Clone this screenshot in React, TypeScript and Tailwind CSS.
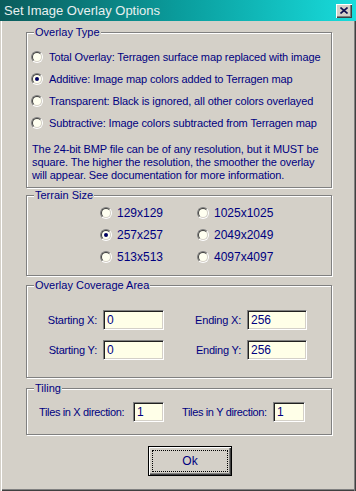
import React from 'react'

const groupBox =
  'ml-[26px] mr-[24px] border border-[#808080] shadow-[inset_1px_1px_0_#fff,1px_1px_0_#fff] px-[4px]'
const legendCls = 'ml-[3px] px-[1px] bg-[#d4d0c8] leading-[13px]'

function Radio({ checked = false }: { checked?: boolean }) {
  return (
    <span className="flex h-[12px] w-[12px] shrink-0 rounded-full border border-t-[#808080] border-l-[#808080] border-r-white border-b-white">
      <span className="flex flex-1 items-center justify-center rounded-full border border-t-[#404040] border-l-[#404040] border-r-[#d4d0c8] border-b-[#d4d0c8] bg-[#fffff0]">
        {checked && <span className="h-[4px] w-[4px] rounded-full bg-[#000060]" />}
      </span>
    </span>
  )
}

function Field({ value, w }: { value: string; w: string }) {
  return (
    <input
      defaultValue={value}
      className={`${w} h-[20px] bg-[#ffffe8] border border-t-[#808080] border-l-[#808080] border-r-white border-b-white shadow-[inset_1px_1px_0_#202020,inset_-1px_-1px_0_#d4d0c8] pl-[3px] text-[12px] text-[#000080] outline-none`}
    />
  )
}

const overlayTypes = [
  { label: 'Total Overlay: Terragen surface map replaced with image', checked: false },
  { label: 'Additive: Image map colors added to Terragen map', checked: true },
  { label: 'Transparent: Black is ignored, all other colors overlayed', checked: false },
  { label: 'Subtractive: Image colors subtracted from Terragen map', checked: false },
]

const sizes = [
  ['129x129', '1025x1025'],
  ['257x257', '2049x2049'],
  ['513x513', '4097x4097'],
]

export default function App() {
  return (
    <div className="relative h-[491px] w-[356px] overflow-hidden bg-[#d4d0c8] font-['Liberation_Sans',Arial,sans-serif] text-[11px] leading-[13px] text-[#000080] shadow-[inset_1px_0_0_#d4d0c8,inset_2px_0_0_#fff,inset_-1px_0_0_#404040,inset_-2px_0_0_#808080,inset_0_-1px_0_#404040,inset_0_-2px_0_#808080]">
      {/* title bar */}
      <div className="flex h-[21px] items-center justify-between bg-linear-to-r from-[#0a5c5c] via-[#0a9c9c] to-[#18dcdc] pl-[4px] pr-[4px]">
        <span className="text-[13px] leading-[15px] text-[#e8f0f0]">Set Image Overlay Options</span>
        <span className="flex h-[14px] w-[16px] items-center justify-center bg-[#d4d0c8] shadow-[inset_1px_1px_0_#fff,inset_-1px_-1px_0_#404040,inset_-2px_-2px_0_#808080]">
          <svg width="8" height="7" viewBox="0 0 8 7">
            <path d="M0.5 0.5 L7.5 6.5 M7.5 0.5 L0.5 6.5" stroke="#101050" strokeWidth="1.6" />
          </svg>
        </span>
      </div>

      <fieldset className={`${groupBox} mt-[5px]`}>
        <legend className={legendCls}>Overlay Type</legend>
        <div className="pt-[7px]">
          {overlayTypes.map((o, i) => (
            <div key={i} className="flex h-[22px] items-center gap-[6px]">
              <Radio checked={o.checked} />
              <span className="whitespace-nowrap tracking-[-0.12px]">{o.label}</span>
            </div>
          ))}
        </div>
        <p className="mt-[9px] pb-[5px] pl-[1px] tracking-[-0.1px]">
          The 24-bit BMP file can be of any resolution, but it MUST be square. The higher the
          resolution, the smoother the overlay will appear. See documentation for more information.
        </p>
      </fieldset>

      <fieldset className={`${groupBox} mt-[1px]`}>
        <legend className={legendCls}>Terrain Size</legend>
        <div className="grid grid-cols-[97px_auto] pb-[7px] pl-[69px]">
          {sizes.map(([a, b]) => (
            <React.Fragment key={a}>
              <div className="flex h-[22px] items-center gap-[5px]">
                <Radio checked={a === '257x257'} />
                <span className="text-[12px]">{a}</span>
              </div>
              <div className="flex h-[22px] items-center gap-[5px]">
                <Radio />
                <span className="text-[12px]">{b}</span>
              </div>
            </React.Fragment>
          ))}
        </div>
      </fieldset>

      <fieldset className={`${groupBox} mt-[3px]`}>
        <legend className={legendCls}>Overlay Coverage Area</legend>
        <div className="flex flex-col gap-[10px] pt-[18px] pb-[17px]">
          {[
            ['Starting X:', '0', 'Ending X:', '256'],
            ['Starting Y:', '0', 'Ending Y:', '256'],
          ].map(([l1, v1, l2, v2]) => (
            <div key={l1} className="flex items-center">
              <span className="w-[66px] text-right tracking-[-0.2px]">{l1}</span>
              <span className="ml-[6px]">
                <Field value={v1} w="w-[61px]" />
              </span>
              <span className="w-[77px] text-right tracking-[-0.2px]">{l2}</span>
              <span className="ml-[6px]">
                <Field value={v2} w="w-[60px]" />
              </span>
            </div>
          ))}
        </div>
      </fieldset>

      <fieldset className={`${groupBox} mt-[4px]`}>
        <legend className={legendCls}>Tiling</legend>
        <div className="flex items-center pt-[7px] pb-[12px] pl-[8px]">
          <span className="w-[88px] whitespace-nowrap tracking-[-0.35px]">Tiles in X direction:</span>
          <span className="ml-[6px]">
            <Field value="1" w="w-[31px]" />
          </span>
          <span className="ml-[18px] w-[89px] whitespace-nowrap tracking-[-0.35px]">Tiles in Y direction:</span>
          <span className="ml-[2px]">
            <Field value="1" w="w-[32px]" />
          </span>
        </div>
      </fieldset>

      <div className="mt-[11px] flex pl-[148px]">
        <button className="h-[30px] w-[84px] border border-black bg-[#d4d0c8] p-[3px] shadow-[inset_1px_1px_0_#fff,inset_-1px_-1px_0_#404040,inset_-2px_-2px_0_#808080] text-[12px] text-[#000080]">
          <span className="flex h-full w-full items-center justify-center border border-dotted border-black">
            Ok
          </span>
        </button>
      </div>
    </div>
  )
}
